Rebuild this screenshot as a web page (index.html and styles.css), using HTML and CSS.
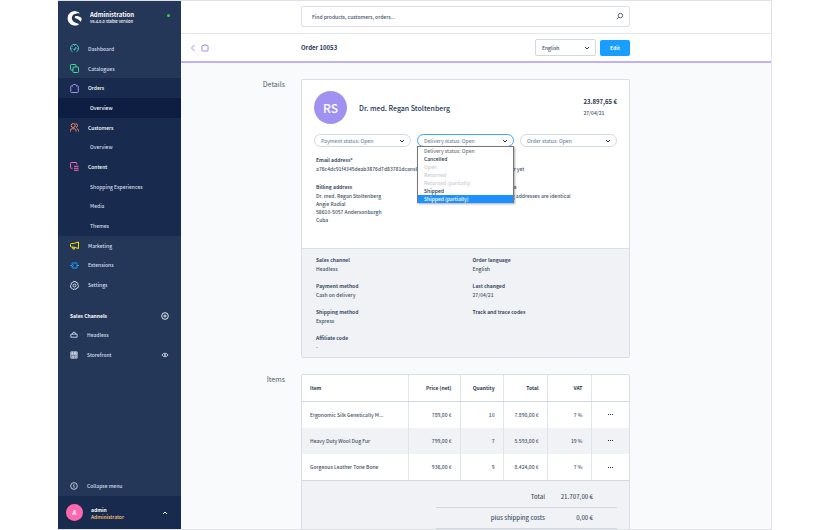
FILE: index.html
```html
<!DOCTYPE html>
<html lang="en">
<head>
<meta charset="utf-8">
<title>Order 10053 | Administration</title>
<link rel="stylesheet" href="styles.css">
</head>
<body>
<div class="app">
  <aside class="sidebar">
    <div class="brand">
      <svg class="brand-logo" viewBox="0 0 28 28"><path fill="#fff" d="M25 5A13.500 13.500 0 1 0 22 25C22.500 24.700 22.300 24.200 21.800 24C16 22 9 20 9 13C9 7.500 13 5 18 4.500C20.500 4.200 23 4.600 25 5Z"/><path fill="#fff" d="M27 13C24 10.500 20 9.500 17 9.500C14 9.500 13.500 12 16 13.300C19 15 23.500 15.500 25 20C27 18 27.500 15.500 27 13Z"/></svg>
      <div class="brand-text"><strong>Administration</strong><span>v6.4.0.0 Stable Version</span></div>
      <i class="online"></i>
    </div>
    <nav class="nav">
      <a href="#"><svg class="icon teal" viewBox="0 0 18 18"><path d="M5 15.500A8 8 0 1 1 13 15.500M9 11L12.500 6M9 2.500V4M3 9H4.500M13.500 9H15M5 5L6 6"/><circle cx="9" cy="11" r="1.200"/></svg>Dashboard</a>
      <a href="#"><svg class="icon green" viewBox="0 0 18 18"><rect x="6" y="6" width="11" height="11" rx="1.500"/><path d="M6 12H2.500Q1 12 1 10.500V2.500Q1 1 2.500 1H10.500Q12 1 12 2.500V6"/></svg>Catalogues</a>
      <a class="open" href="#"><svg class="icon purple" viewBox="0 0 18 18"><path d="M5 3.500H3Q1.500 3.500 1.500 5V15.500Q1.500 17 3 17H15Q16.500 17 16.500 15.500V5Q16.500 3.500 15 3.500H13M5 5V3.500Q5 1 7.500 1H10.500Q13 1 13 3.500V5"/></svg>Orders</a>
      <a class="sub current" href="#">Overview</a>
      <a class="open" href="#"><svg class="icon orange" viewBox="0 0 18 18"><circle cx="6.500" cy="5" r="4"/><path d="M1 17V15Q1 11.500 4.500 11.500H8.500Q12 11.500 12 15V17M11.500 1.200Q15 1.500 15 5Q15 8 12 9M14 11.500Q17 12 17 15.500V17"/></svg>Customers</a>
      <a class="sub" href="#">Overview</a>
      <a class="open" href="#"><svg class="icon pink" viewBox="0 0 18 18"><path d="M5 12.500H2.500Q1 12.500 1 11V2.500Q1 1 2.500 1H12Q13.500 1 13.500 2.500V5M8 8.500H17M8 12.500H17M8 16.500H17"/></svg>Content</a>
      <a class="sub" href="#">Shopping Experiences</a>
      <a class="sub" href="#">Media</a>
      <a class="sub" href="#">Themes</a>
      <a href="#"><svg class="icon yellow" viewBox="0 0 18 18"><path d="M7 5L17 2V15L7 12H3Q1 12 1 10V7Q1 5 3 5ZM5 12L6 16H9L8 12.500"/></svg>Marketing</a>
      <a href="#"><svg class="icon blue" viewBox="0 0 18 18"><path d="M5 4H13Q14 4 14 5V13Q14 14 13 14H5Q4 14 4 13V11Q7 11 7 9Q7 7 4 7V5Q4 4 5 4ZM0 9H4M14 9H18"/></svg>Extensions</a>
      <a href="#"><svg class="icon" viewBox="0 0 18 18"><path d="M6.800 1H11.200L12 3L14.200 2.800L16 5.500L15.500 8L17.200 9.500L15.800 13.500L13.500 14L12 16.500L9 16L6 17L4 14.500L1.500 13.500L1 9.500L2.500 7.500L2 5L4.500 3L6 3Z"/><circle cx="9" cy="9" r="3"/></svg>Settings</a>
    </nav>
    <section class="channels">
      <h2>Sales Channels<button type="button" aria-label="Add sales channel"><svg class="icon" viewBox="0 0 18 18"><circle cx="9" cy="9" r="7.500"/><path d="M9 5.500V12.500M5.500 9H12.500"/></svg></button></h2>
      <a href="#"><svg class="icon" viewBox="0 0 18 18"><path d="M2 7H16V14H2ZM5 7L7 3H11L13 7"/></svg>Headless</a>
      <a href="#"><svg class="icon" viewBox="0 0 18 18"><path d="M2 2H16V16H2ZM2 5H16M2 8.500H16M6 2V8M10 2V8M13 2V8M5 16V11H8V16M11 11H14V14H11Z"/></svg>Storefront<svg class="icon eye" viewBox="0 0 18 18"><path d="M2 9Q5 5 9 5T16 9Q13 13 9 13T2 9Z"/><circle cx="9" cy="9" r="1.500"/></svg></a>
    </section>
    <button class="collapse" type="button"><svg class="icon" viewBox="0 0 18 18"><circle cx="9" cy="9" r="7.500"/><path d="M7.500 8H9V13M9 4.500V6"/></svg>Collapse menu</button>
    <footer class="user">
      <span class="avatar">A</span>
      <div class="user-text"><strong>admin</strong><span>Administrator</span></div>
      <svg class="caret" viewBox="0 0 8 8"><path d="M2 5L4 3L6 5"/></svg>
    </footer>
  </aside>

  <main class="main">
    <header class="topbar">
      <label class="search"><input type="search" aria-label="Search" placeholder="Find products, customers, orders..."><svg viewBox="0 0 10 10"><circle cx="6" cy="4" r="2.500"/><path d="M4 6L2 8"/></svg></label>
    </header>
    <div class="smartbar">
      <div class="back">
        <a href="#" aria-label="Back"><svg viewBox="0 0 8 8"><path d="M5.500 1L2.500 4L5.500 7"/></svg></a>
        <a href="#" aria-label="Orders"><svg viewBox="0 0 8 8"><path d="M2.500 1.500H1.500Q1 1.500 1 2V6.500Q1 7 1.500 7H6.500Q7 7 7 6.500V2Q7 1.500 6.500 1.500H5.500M2.500 2V1H5.500V2"/></svg></a>
      </div>
      <div class="smartbar-body">
        <h1>Order 10053</h1>
        <div class="select language"><select aria-label="Language"><option>English</option></select><svg viewBox="0 0 8 8"><path d="M2 3L4 5L6 3"/></svg></div>
        <button class="primary" type="button">Edit</button>
      </div>
    </div>

    <div class="content">
      <h2 class="section-title">Details</h2>
      <section class="card">
        <div class="customer">
          <span class="initials">RS</span>
          <h3>Dr. med. Regan Stoltenberg</h3>
          <div class="amount"><strong>23.897,65 €</strong><span>27/04/21</span></div>
        </div>
        <div class="states">
          <div class="select pill"><select aria-label="Payment status"><option>Payment status: Open</option></select><svg viewBox="0 0 8 8"><path d="M2 3L4 5L6 3"/></svg></div>
          <div class="select pill focus"><select aria-label="Delivery status"><option>Delivery status: Open</option></select><svg viewBox="0 0 8 8"><path d="M2 3L4 5L6 3"/></svg>
            <ul class="menu" role="listbox" aria-label="Delivery status">
              <li class="placeholder" role="option">Delivery status: Open</li>
              <li role="option">Cancelled</li>
              <li class="disabled" role="option">Open</li>
              <li class="disabled" role="option">Returned</li>
              <li class="disabled" role="option">Returned (partially)</li>
              <li role="option">Shipped</li>
              <li class="active" role="option">Shipped (partially)</li>
            </ul>
          </div>
          <div class="select pill"><select aria-label="Order status"><option>Order status: Open</option></select><svg viewBox="0 0 8 8"><path d="M2 3L4 5L6 3"/></svg></div>
        </div>
        <div class="facts addresses">
          <dl>
            <dt>Email address*</dt><dd>a76c4dc91f4345deab3876d7d83781dcanslem</dd>
            <dt>Billing address</dt><dd>Dr. med. Regan Stoltenberg<br>Angie Radial<br>58610-5057 Andersonburgh<br>Cuba</dd>
          </dl>
          <dl>
            <dt>Phone number</dt><dd>No phone number yet</dd>
            <dt>Shipping contacts</dt><dd>Shipping &amp; billing addresses are identical</dd>
          </dl>
        </div>
        <div class="facts meta">
          <dl>
            <dt>Sales channel</dt><dd>Headless</dd>
            <dt>Payment method</dt><dd>Cash on delivery</dd>
            <dt>Shipping method</dt><dd>Express</dd>
            <dt>Affiliate code</dt><dd>-</dd>
          </dl>
          <dl>
            <dt>Order language</dt><dd>English</dd>
            <dt>Last changed</dt><dd>27/04/21</dd>
            <dt>Track and trace codes</dt>
          </dl>
        </div>
      </section>

      <h2 class="section-title">Items</h2>
      <section class="card items">
        <table>
          <colgroup><col class="c-item"><col class="c-price"><col class="c-qty"><col class="c-total"><col class="c-vat"><col class="c-more"></colgroup>
          <thead><tr><th>Item</th><th>Price (net)</th><th>Quantity</th><th>Total</th><th>VAT</th><th></th></tr></thead>
          <tbody>
            <tr><td>Ergonomic Silk Genetically M...</td><td>789,00 €</td><td>10</td><td>7.890,00 €</td><td>7 %</td><td><button type="button" aria-label="More"><i></i><i></i><i></i></button></td></tr>
            <tr><td>Heavy Duty Wool Dug Fur</td><td>799,00 €</td><td>7</td><td>5.593,00 €</td><td>19 %</td><td><button type="button" aria-label="More"><i></i><i></i><i></i></button></td></tr>
            <tr><td>Gorgeous Leather Tone Bone</td><td>936,00 €</td><td>9</td><td>8.424,00 €</td><td>7 %</td><td><button type="button" aria-label="More"><i></i><i></i><i></i></button></td></tr>
          </tbody>
        </table>
        <dl class="summary">
          <div><dt>Total</dt><dd>21.707,00 €</dd></div>
          <div><dt>plus shipping costs</dt><dd>0,00 €</dd></div>
        </dl>
      </section>
    </div>
  </main>
</div>
</body>
</html>
```
FILE: styles.css
```css
* { box-sizing: border-box; }
body {
  margin: 0;
  background: #fff;
  color: #44536a;
  font: 500 5px/8px "Noto Sans CJK SC", "Noto Sans", sans-serif;
}
h1, h2, h3, dl, dd, ul { margin: 0; padding: 0; }
a { color: inherit; text-decoration: none; }
button, input, select { margin: 0; padding: 0; border: 0; background: none; color: inherit; font: inherit; }
svg { display: block; flex: none; fill: none; stroke: currentColor; }

.app {
  display: grid;
  grid-template-columns: 123px minmax(0, 1fr);
  height: 100vh;
  margin: 0 58px;
  border: 1px solid #dfe1e4;
  border-width: 1px 1px 1px 0;
  overflow: hidden;
}

/* Sidebar */
.sidebar { display: flex; flex-direction: column; min-height: 0; background: #243758; color: #d3dbe8; }
.brand { display: flex; align-items: center; gap: 8px; height: 38px; padding: 2px 11px 6px 9px; }
.brand-logo { width: 15px; height: 15px; stroke: none; }
.brand-text { display: flex; flex: 1; flex-direction: column; line-height: 7px; }
.brand-text strong { color: #fff; font-size: 6px; }
.brand-text span { color: #fff; font-size: 4px; }
.online { width: 3px; height: 3px; margin-bottom: 6px; border-radius: 50%; background: #37d046; }
.nav { display: grid; grid-auto-rows: 1fr; height: 256px; flex: none; }
.nav a { display: flex; align-items: center; gap: 9px; padding-left: 12px; }
.nav .open, .nav .open ~ .sub { background: #182a4d; color: #fff; }
.nav .sub { padding-left: 32px; }
.nav .open ~ .sub { color: #d3dbe8; }
.nav .open ~ .current { background: #0d1e42; color: #fff; }
.icon { width: 9px; height: 9px; stroke-width: 2; }
.teal { color: #53c3d0; }
.green { color: #48d597; }
.purple { color: #a092f0; }
.orange { color: #f88962; }
.pink { color: #ff68b4; }
.yellow { color: #ffe000; }
.blue { color: #189eff; }
.channels { padding: 12px 12px 0; }
.channels h2 { display: flex; align-items: center; justify-content: space-between; height: 18px; color: #fff; font-size: 5px; line-height: 8px; }
.channels a { display: flex; align-items: center; gap: 9px; height: 20px; }
.channels .icon { width: 8px; height: 8px; }
.channels .eye { margin-left: auto; }
.collapse { display: flex; align-items: center; gap: 9px; height: 20px; margin-top: auto; padding-left: 12px; }
.collapse .icon { width: 8px; height: 8px; }
.user { display: flex; align-items: center; gap: 8px; height: 33px; flex: none; padding: 0 12px 0 8px; background: #182a4d; }
.avatar { width: 17px; border-radius: 50%; background: #ff68ac; color: #fff; font-size: 6px; font-weight: bold; line-height: 17px; text-align: center; }
.user-text { display: flex; flex: 1; flex-direction: column; line-height: 7px; }
.user-text strong { color: #fff; }
.user-text span { color: #ffc870; }
.caret { width: 8px; height: 8px; color: #fff; }

/* Top bars */
.main { --gutter: 120px; --end: 141px; min-width: 0; overflow: hidden; background: #f9fafb; }
.topbar { height: 33px; padding: 5px var(--end) 0 var(--gutter); border-bottom: 1px solid #e4e8ee; background: #fff; }
.search { display: flex; align-items: center; height: 21px; padding: 0 5px 0 10px; border: 1px solid #d8dfe8; border-radius: 2px; }
.search input { flex: 1; min-width: 0; outline: 0; appearance: none; }
.search input::placeholder { color: #44536a; opacity: 1; }
.search svg { width: 9px; height: 9px; }
.smartbar { display: grid; grid-template-columns: var(--gutter) minmax(0, 1fr); align-items: center; height: 29px; padding-right: var(--end); border-bottom: 2px solid #beb1fb; background: #fff; }
.back { display: flex; gap: 4px; padding-left: 8px; color: #9a89ee; }
.back svg { width: 8px; height: 8px; }
.smartbar-body { display: flex; align-items: center; gap: 4px; }
h1 { flex: 1; color: #243758; font-size: 6px; line-height: 10px; }
.select { position: relative; display: flex; align-items: center; border: 1px solid #d1d9e0; background: #fff; }
.select select { width: 100%; height: 100%; padding: 0 6px; outline: 0; appearance: none; }
.select > svg { position: absolute; right: 4px; width: 8px; height: 8px; color: #29364a; pointer-events: none; }
.language { width: 61px; height: 17px; border-radius: 2px; }
.primary { width: 30px; height: 16px; border-radius: 2px; background: #189eff; color: #fff; font-weight: bold; }

/* Content */
.content { display: grid; grid-template-columns: var(--gutter) minmax(0, 1fr); row-gap: 16px; padding: 16px var(--end) 0 0; }
.section-title { padding-right: 16px; color: #4c5a70; font-size: 7px; font-weight: normal; line-height: 10px; text-align: right; }
.card { border: 1px solid #d8dfe8; border-radius: 2px; background: #fff; }
.customer { display: flex; align-items: center; gap: 12px; padding: 11px 12px 10px; }
.initials { width: 33px; border-radius: 50%; background: #a092f0; color: #fff; font-size: 12px; line-height: 33px; text-align: center; }
.customer h3 { flex: 1; color: #243758; font-size: 7px; font-weight: 500; line-height: 10px; }
.amount { display: flex; flex-direction: column; gap: 1px; line-height: 10px; }
.amount strong { color: #29364a; font-size: 6px; }
.states { display: grid; grid-template-columns: repeat(3, 1fr); gap: 6px; padding: 0 12px; }
.pill { height: 13px; border-radius: 7px; color: #758ba3; }
.focus { border-color: #3ba9f7; }
.menu { position: absolute; z-index: 1; top: 11px; left: -1px; right: -1px; border: 1px solid #777; border-width: 1px 1px 0; background: #fff; color: #29364a; box-shadow: 1px 1px 2px #0005; list-style: none; }
.menu li { padding-left: 6px; line-height: 8px; }
.menu .placeholder { color: #6d7787; }
.menu .disabled { color: #c9ced5; }
.menu .active { background: #1e90ff; color: #fff; }
.facts { display: grid; grid-template-columns: repeat(2, minmax(0, 1fr)); padding-left: 14px; }
.facts dt { color: #3a4a63; font-weight: bold; }
.addresses { min-height: 101px; padding-top: 7px; }
.addresses dt { line-height: 11px; }
.addresses dd { margin-bottom: 8px; line-height: 8px; }
.meta { border-top: 1px solid #d8dfe8; background: #f0f2f5; padding: 6px 0 6px 14px; }
.meta dt, .meta dd { line-height: 9px; }
.meta dd { margin-bottom: 8px; }
.meta dd:last-child { margin-bottom: 0; }

/* Items */
table { width: 100%; height: 106px; table-layout: fixed; border-collapse: collapse; }
.c-item { width: 106px; }
.c-price { width: 52px; }
.c-qty { width: 43px; }
.c-total { width: 44px; }
.c-vat { width: 44px; }
th, td { padding: 0 8px; border-right: 1px solid #dfe5ec; text-align: right; }
th { height: 26px; border-bottom: 1px solid #d1d9e0; color: #29364a; }
td { height: 26px; }
th:first-child, td:first-child { text-align: left; }
th:last-child, td:last-child { border-right: 0; text-align: center; }
tbody tr:nth-child(even) { background: #f0f2f5; }
tbody tr:last-child td { border-bottom: 1px solid #d1d9e0; }
td button { display: flex; gap: 1px; margin: 0 auto; }
td button i { width: 1px; height: 1px; background: #29364a; }
.items { overflow: hidden; background: #f0f2f5; }
.items table { background: #fff; }
.summary { padding: 6px 12px 20px 134px; font-size: 6px; }
.summary div { display: grid; grid-template-columns: minmax(0, 1fr) 48px; padding-right: 24px; border-bottom: 1px solid #d1d9e0; line-height: 20px; text-align: right; }
```
